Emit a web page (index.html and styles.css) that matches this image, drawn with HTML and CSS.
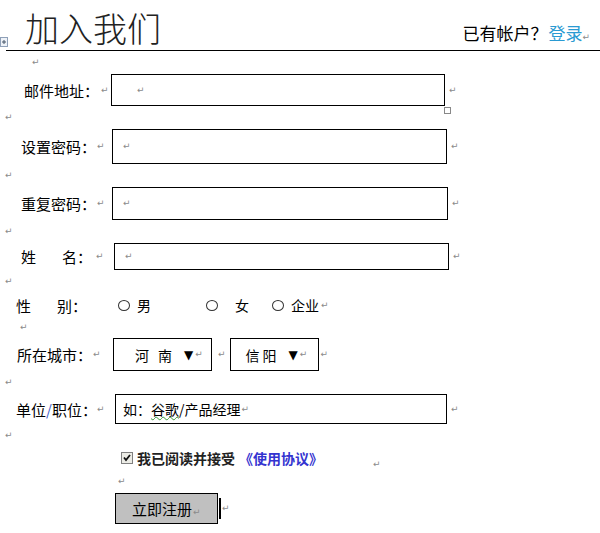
FILE: index.html
```html
<!DOCTYPE html>
<html lang="zh-CN">
<head>
    <meta charset="UTF-8">
    <title>加入我们</title>
    <link rel="stylesheet" href="styles.css">
</head>
<body>
    <div class="top">
        <span class="handle">
            <svg width="8" height="10" viewBox="0 0 8 10"><rect x="0.5" y="0.5" width="7" height="9" fill="#eef2f8" stroke="#8fa0b8"/><path d="M2 5h4M4 3v4" stroke="#456" stroke-width="1"/></svg>
        </span>
        <div class="header">
            <h1 class="title">加入我们</h1>
            <p class="account">已有帐户？<a class="login">登录</a><span class="pm">↵</span></p>
        </div>
    </div>

    <div class="blank first"><span class="pm">↵</span></div>

    <div class="row row1">
        <div class="lab"><span>邮件地址：</span><span class="pm">↵</span></div>
        <div class="box box1"><span class="pm">↵</span><span class="grip"></span></div>
        <span class="pm after">↵</span>
    </div>
    <div class="blank"><span class="pm">↵</span></div>

    <div class="row row2">
        <div class="lab"><span>设置密码：</span><span class="pm">↵</span></div>
        <div class="box box2"><span class="pm">↵</span></div>
        <span class="pm after">↵</span>
    </div>
    <div class="blank"><span class="pm">↵</span></div>

    <div class="row row3">
        <div class="lab"><span>重复密码：</span><span class="pm">↵</span></div>
        <div class="box box3"><span class="pm">↵</span></div>
        <span class="pm after">↵</span>
    </div>
    <div class="blank"><span class="pm">↵</span></div>

    <div class="row row4">
        <div class="lab"><span class="wide">姓</span><span>名：</span><span class="pm">↵</span></div>
        <div class="box box4"><span class="pm">↵</span></div>
        <span class="pm after">↵</span>
    </div>
    <div class="blank"><span class="pm">↵</span></div>

    <div class="row row5">
        <div class="lab"><span class="wide">性</span><span>别：</span></div>
        <span class="radio"></span><span class="opt male">男</span>
        <span class="radio"></span><span class="opt female">女</span>
        <span class="radio"></span><span class="opt">企业</span><span class="pm">↵</span>
    </div>
    <div class="blank mid"><span class="pm">↵</span></div>

    <div class="row row6">
        <div class="lab"><span>所在城市：</span><span class="pm">↵</span></div>
        <div class="box sel sel1"><span class="c1">河</span><span class="c2">南</span><span class="arrow">▼</span><span class="pm">↵</span></div>
        <span class="pm gap">↵</span>
        <div class="box sel sel2"><span class="c1">信</span><span class="c2">阳</span><span class="arrow">▼</span><span class="pm">↵</span></div>
        <span class="pm">↵</span>
    </div>
    <div class="blank"><span class="pm">↵</span></div>

    <div class="row row7">
        <div class="lab"><span>单位<span class="slash">/</span>职位：</span><span class="pm">↵</span></div>
        <div class="box box7"><span>如：<span class="squig">谷歌</span>/产品经理</span><span class="pm">↵</span></div>
        <span class="pm after">↵</span>
    </div>
    <div class="blank"><span class="pm">↵</span></div>

    <div class="agree">
        <span class="check">
            <svg width="12" height="12" viewBox="0 0 12 12"><rect x="0.5" y="0.5" width="11" height="11" fill="#ecece6" stroke="#808080"/><path d="M3 5.5l2 2.5 4-5" fill="none" stroke="#111" stroke-width="1.8"/></svg>
        </span>
        <span class="agree-text">我已阅读并接受</span><a class="terms">《使用协议》</a>
        <span class="pm low">↵</span>
    </div>
    <div class="blank btn-gap"><span class="pm">↵</span></div>

    <div class="row submit">
        <button class="btn">立即注册<span class="pm">↵</span></button>
        <span class="caret"></span><span class="pm">↵</span>
    </div>
</body>
</html>
```

FILE: styles.css
```css
body {
    margin: 0;
    background: #fff;
    color: #000;
    font-family: "Noto Sans CJK SC", "DejaVu Sans", sans-serif;
    font-size: 14px;
}
.pm {
    font-family: "DejaVu Sans", sans-serif;
    font-size: 9px;
    color: #8a8a8a;
    line-height: 1;
}

/* header */
.top {
    display: flex;
    align-items: flex-start;
    height: 51px;
}
.handle {
    width: 6px;
    padding-top: 37px;
    line-height: 0;
}
.header {
    flex: 1;
    display: flex;
    justify-content: space-between;
    align-items: flex-start;
    height: 50px;
    border-bottom: 1px solid #000;
}
.title {
    margin: 10px 0 0 19px;
    font-size: 34px;
    line-height: 36px;
    font-weight: 300;
    color: #222;
}
.account {
    margin: 22px 10px 0 0;
    font-size: 17px;
    line-height: 22px;
}
.login {
    color: #2a9ad2;
    margin-left: 1px;
    text-decoration: none;
}

/* blank paragraph lines */
.blank {
    display: flex;
    align-items: center;
    height: 23px;
    padding-left: 5px;
}
.blank.first { padding-left: 32px; }
.blank.mid { height: 21px; padding-left: 20px; }
.blank.btn-gap { height: 24px; padding-left: 118px; }

/* form rows */
.row {
    display: flex;
    align-items: center;
    white-space: nowrap;
}
.lab {
    display: flex;
    align-items: center;
    flex-shrink: 0;
    box-sizing: border-box;
    padding-left: 21px;
    width: 112px;
    font-size: 15px;
}
.lab .pm {
    margin-left: 1px;
}
.wide {
    width: 41px;
}
.box {
    display: flex;
    align-items: center;
    flex-shrink: 0;
    box-sizing: border-box;
    border: 1px solid #000;
    position: relative;
}
.box > .pm {
    margin-left: 10px;
}
.after {
    margin-left: 4px;
}

.row1 { height: 32px; }
.row1 .lab { padding-left: 24px; width: 111px; }
.row1 .lab .pm { margin-left: 2px; }
.box1 { width: 334px; height: 32px; }
.box1 > .pm { margin-left: 25px; }
.grip {
    position: absolute;
    right: -7px;
    bottom: -9px;
    width: 5px;
    height: 5px;
    border: 1px solid #888;
}

.row2 { height: 35px; }
.box2 { width: 335px; height: 35px; }

.row3 { height: 33px; }
.box3 { width: 336px; height: 33px; }

.row4 { height: 27px; }
.row4 .lab { width: 114px; }
.row4 .lab .pm { margin-left: 4px; }
.box4 { width: 335px; height: 27px; }

.row5 { height: 24px; }
.row5 .lab { padding-left: 16px; width: 118px; }
.radio {
    box-sizing: border-box;
    width: 12px;
    height: 11px;
    border: 1px solid #333;
    border-radius: 50%;
}
.opt {
    margin-left: 7px;
}
.male { margin-right: 55px; }
.female { margin-left: 17px; margin-right: 23px; }
.row5 .pm { margin-left: 2px; }

.row6 { height: 33px; }
.row6 .lab { padding-left: 17px; width: 113px; }
.sel { height: 33px; }
.sel1 { width: 99px; padding-left: 21px; }
.sel1 .c2 { margin-left: 9px; }
.sel1 .arrow { margin-left: 12px; }
.sel2 { width: 89px; padding-left: 15px; }
.sel2 .c2 { margin-left: 3px; }
.sel2 .arrow { margin-left: 12px; }
.arrow {
    font-family: "DejaVu Sans", sans-serif;
    font-size: 12px;
}
.sel > .pm { margin-left: 2px; }
.gap { margin: 0 4px 0 6px; }
.sel2 + .pm { margin-left: 2px; }

.row7 { height: 30px; }
.row7 .lab { padding-left: 16px; width: 115px; }
.row7 .lab .pm { margin-left: 0; }
.slash { color: #3a5cc8; }
.box7 { width: 332px; height: 30px; padding-left: 7px; }
.box7 > .pm { margin-left: 1px; }
.squig {
    text-decoration: underline wavy #3a9a3a;
    text-decoration-thickness: 1px;
}

/* agreement */
.agree {
    display: flex;
    align-items: center;
    height: 22px;
    padding-left: 121px;
}
.check {
    line-height: 0;
    margin-right: 4px;
}
.agree-text {
    font-weight: bold;
    color: #222;
}
.terms {
    font-weight: bold;
    color: #3434d0;
    margin-left: 4px;
}
.low {
    margin-left: 50px;
    margin-top: 12px;
}

/* submit */
.submit {
    height: 31px;
    padding-left: 115px;
}
.btn {
    box-sizing: border-box;
    width: 103px;
    height: 31px;
    padding: 0 0 0 16px;
    text-align: left;
    background: #c0c0c0;
    border: 1px solid #000;
    border-radius: 0;
    font-family: "Noto Sans CJK SC", sans-serif;
    font-size: 15px;
    color: #000;
}
.btn .pm { margin-left: 1px; }
.caret {
    width: 2px;
    height: 21px;
    background: #000;
    margin-left: 1px;
}
.caret + .pm { margin-left: 1px; }
```
